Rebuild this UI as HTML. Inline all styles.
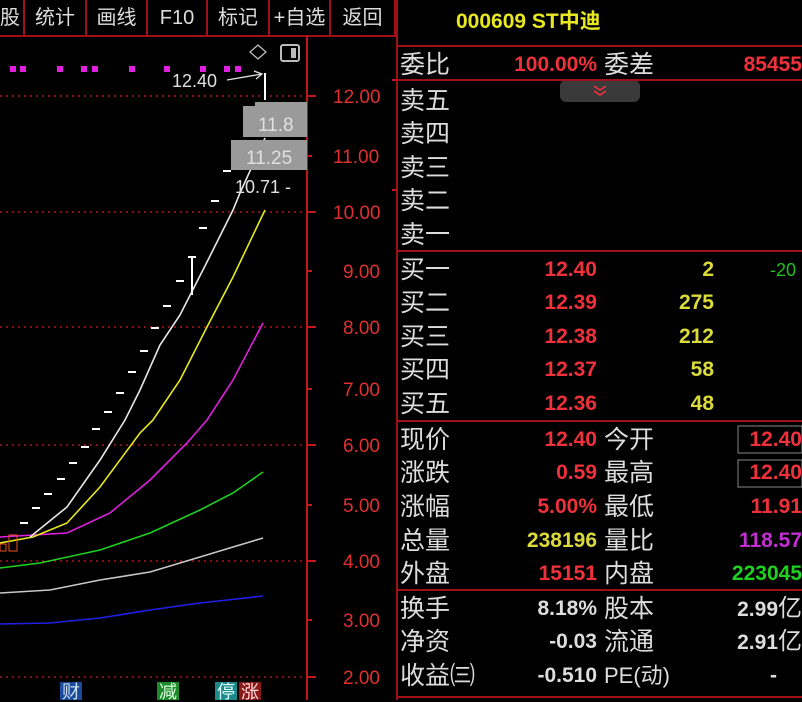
<!DOCTYPE html>
<html><head><meta charset="utf-8"><style>
body{margin:0;width:802px;height:700px;background:#000;overflow:hidden;position:relative;font-family:"Liberation Sans","WenQuanYi Zen Hei","Noto Sans CJK SC",sans-serif}
.t{position:absolute;white-space:nowrap}
.tb{position:absolute;top:0;height:35px;border-right:2px solid #a01018;color:#ddd;font-size:20px;line-height:36px;text-align:center}
.lab{position:absolute;left:400px;color:#ddd;font-size:25px;line-height:32px}
.lab2{position:absolute;left:604px;color:#ddd;font-size:25px;line-height:32px}
.v1{position:absolute;right:205px;font-size:21px;font-weight:bold;line-height:32px;text-align:right}
.v2{position:absolute;right:0px;font-size:21px;font-weight:bold;line-height:32px;text-align:right}
.vq{position:absolute;right:88px;font-size:21px;font-weight:bold;line-height:32px;color:#dada3a}
.r{color:#f0303a}.y{color:#dada3a}.w{color:#ddd}
.hl{position:absolute;left:397px;width:405px;height:2px;background:#a01018}
.ax{position:absolute;left:333px;color:#e03030;font-size:19px}
</style></head><body>
<div style="position:absolute;left:0;top:35px;width:397px;height:2px;background:#a01018"></div>
<div class="tb" style="left:0;width:23px;text-align:left">股</div>
<div class="tb" style="left:25px;width:60px">统计</div>
<div class="tb" style="left:87px;width:59px">画线</div>
<div class="tb" style="left:148px;width:58px">F10</div>
<div class="tb" style="left:208px;width:60px">标记</div>
<div class="tb" style="left:270px;width:59px">+自选</div>
<div class="tb" style="left:331px;width:63px">返回</div>
<svg width="802" height="700" style="position:absolute;left:0;top:0">
<g stroke="#b01818" stroke-width="1.5" stroke-dasharray="2,4">
<line x1="0" y1="96" x2="306" y2="96"/><line x1="0" y1="212" x2="306" y2="212"/><line x1="0" y1="327" x2="306" y2="327"/><line x1="0" y1="445" x2="306" y2="445"/><line x1="0" y1="561" x2="306" y2="561"/><line x1="0" y1="677" x2="306" y2="677"/></g>
<line x1="307" y1="36" x2="307" y2="700" stroke="#c01818" stroke-width="2"/>
<line x1="397" y1="0" x2="397" y2="700" stroke="#a01018" stroke-width="2"/>
<g stroke="#c01818" stroke-width="2">
<line x1="307" y1="96" x2="316" y2="96"/><line x1="307" y1="156" x2="312" y2="156"/><line x1="307" y1="212" x2="316" y2="212"/><line x1="307" y1="271" x2="312" y2="271"/><line x1="307" y1="327" x2="316" y2="327"/><line x1="307" y1="389" x2="312" y2="389"/><line x1="307" y1="445" x2="316" y2="445"/><line x1="307" y1="505" x2="312" y2="505"/><line x1="307" y1="561" x2="316" y2="561"/><line x1="307" y1="620" x2="312" y2="620"/><line x1="307" y1="677" x2="316" y2="677"/>
<line x1="397" y1="80" x2="392" y2="80"/><line x1="397" y1="190" x2="392" y2="190"/></g>
<g fill="none" stroke-width="1.6">
<polyline stroke="#2020e8" points="0,624 50,623 100,618 150,610 200,603 263,596"/>
<polyline stroke="#c8c8c8" points="0,593 50,590 100,580 150,572 200,557 233,547 263,538"/>
<polyline stroke="#20d020" points="0,568 40,563 100,550 150,533 200,510 233,493 263,472"/>
<polyline stroke="#e020e0" points="0,537 67,533 110,513 150,480 187,443 207,420 233,380 263,323"/>
<polyline stroke="#e8e820" points="0,543 33,537 67,523 100,487 140,433 153,420 180,380 207,327 233,277 265,210"/>
<polyline stroke="#e8e8e8" points="30,537 67,507 100,460 125,420 140,390 160,345 180,315 207,262 233,210 240,193 265,138"/>
</g>
<g fill="#fff">
<rect x="20" y="522" width="8" height="2"/><rect x="32" y="507" width="8" height="2"/><rect x="44" y="493" width="8" height="2"/><rect x="57" y="478" width="8" height="2"/><rect x="69" y="462" width="8" height="2"/><rect x="81" y="446" width="8" height="2"/><rect x="92" y="428" width="8" height="2"/><rect x="104" y="411" width="8" height="2"/><rect x="116" y="392" width="8" height="2"/><rect x="128" y="371" width="8" height="2"/><rect x="140" y="350" width="8" height="2"/><rect x="151" y="327" width="8" height="2"/><rect x="163" y="305" width="8" height="2"/><rect x="176" y="280" width="8" height="2"/><rect x="199" y="227" width="8" height="2"/><rect x="211" y="200" width="8" height="2"/><rect x="223" y="170" width="8" height="2"/>
<rect x="191" y="257" width="2" height="38"/><rect x="188" y="256" width="8" height="2"/>
<rect x="264" y="73" width="2" height="27"/>
</g>
<rect x="255" y="102" width="52" height="4" fill="#9a9a9a"/>
<rect x="243" y="106" width="64" height="31" fill="#9a9a9a"/>
<rect x="231" y="140" width="76" height="30" fill="#9a9a9a"/>
<text x="258" y="131" fill="#e0e0e0" font-size="19" font-family="Liberation Sans">11.8</text>
<text x="246" y="164" fill="#e0e0e0" font-size="19" font-family="Liberation Sans">11.25</text>
<text x="235" y="193" fill="#e0e0e0" font-size="18" font-family="Liberation Sans">10.71 -</text>
<text x="172" y="87" fill="#e0e0e0" font-size="18" font-family="Liberation Sans">12.40</text>
<path d="M227 80 L262 74 M254 71 L262 74 L256 79" stroke="#e0e0e0" stroke-width="1.3" fill="none"/>
<path d="M258 45 L266 52 L258 59 L250 52 Z" stroke="#bbb" stroke-width="1.3" fill="none"/>
<rect x="281" y="45" width="18" height="16" rx="2" stroke="#bbb" stroke-width="2" fill="none"/><rect x="291" y="48" width="5" height="10" fill="#bbb"/>
<g fill="#e020e0"><rect x="10" y="66" width="6" height="6"/><rect x="20" y="66" width="6" height="6"/><rect x="57" y="66" width="6" height="6"/><rect x="81" y="66" width="6" height="6"/><rect x="92" y="66" width="6" height="6"/><rect x="129" y="66" width="6" height="6"/><rect x="164" y="66" width="6" height="6"/><rect x="200" y="66" width="6" height="6"/><rect x="224" y="66" width="6" height="6"/><rect x="235" y="66" width="6" height="6"/></g>
<rect x="0" y="544" width="6" height="7" stroke="#f05020" fill="none"/><rect x="9" y="535" width="8" height="16" stroke="#f05020" fill="none"/>
<rect x="560" y="80" width="80" height="22" rx="6" fill="#3a3a3a"/>
<path d="M594 86 L600 90 L606 86 M594 91 L600 95 L606 91" stroke="#f03040" stroke-width="1.6" fill="none"/>
<rect x="738" y="426" width="64" height="27" stroke="#888" fill="none"/><rect x="738" y="460" width="64" height="27" stroke="#888" fill="none"/>
</svg>
<div class="ax" style="top:87px">12.00</div><div class="ax" style="top:147px">11.00</div><div class="ax" style="top:203px">10.00</div><div class="ax" style="top:262px;left:343px">9.00</div><div class="ax" style="top:318px;left:343px">8.00</div><div class="ax" style="top:380px;left:343px">7.00</div><div class="ax" style="top:436px;left:343px">6.00</div><div class="ax" style="top:496px;left:343px">5.00</div><div class="ax" style="top:552px;left:343px">4.00</div><div class="ax" style="top:611px;left:343px">3.00</div><div class="ax" style="top:668px;left:343px">2.00</div>
<div class="t" style="left:60px;top:682px;width:22px;height:18px;background:#1a4a9a;color:#cde;font-size:18px;line-height:20px;text-align:center">财</div>
<div class="t" style="left:157px;top:682px;width:22px;height:18px;background:#1a8a2a;color:#dfd;font-size:18px;line-height:20px;text-align:center">减</div>
<div class="t" style="left:215px;top:682px;width:22px;height:18px;background:#1a8a8a;color:#dff;font-size:18px;line-height:20px;text-align:center">停</div>
<div class="t" style="left:239px;top:682px;width:22px;height:18px;background:#8a1a1a;color:#fdd;font-size:18px;line-height:20px;text-align:center">涨</div>

<div class="t" style="left:456px;top:8px;color:#e8e820;font-size:21px;font-weight:bold;line-height:28px">000609 ST中迪</div>
<div class="hl" style="top:45px"></div><div class="hl" style="top:79px"></div><div class="hl" style="top:250px"></div><div class="hl" style="top:420px"></div><div class="hl" style="top:589px"></div><div class="hl" style="top:696px"></div>
<div class="lab" style="top:49px">委比</div><div class="v1 r" style="top:49px">100.00%</div><div class="lab2" style="top:49px">委差</div><div class="v2 r" style="top:49px">85455</div>
<div class="lab" style="top:85px">卖五</div><div class="lab" style="top:118px">卖四</div><div class="lab" style="top:152px">卖三</div><div class="lab" style="top:185px">卖二</div><div class="lab" style="top:219px">卖一</div>
<div class="lab" style="top:254px">买一</div><div class="v1 r" style="top:254px">12.40</div><div class="vq" style="top:254px">2</div><div class="t" style="left:770px;top:254px;color:#20c020;font-size:18px;line-height:32px">-20</div>
<div class="lab" style="top:287px">买二</div><div class="v1 r" style="top:287px">12.39</div><div class="vq" style="top:287px">275</div>
<div class="lab" style="top:321px">买三</div><div class="v1 r" style="top:321px">12.38</div><div class="vq" style="top:321px">212</div>
<div class="lab" style="top:354px">买四</div><div class="v1 r" style="top:354px">12.37</div><div class="vq" style="top:354px">58</div>
<div class="lab" style="top:388px">买五</div><div class="v1 r" style="top:388px">12.36</div><div class="vq" style="top:388px">48</div>
<div class="lab" style="top:424px">现价</div><div class="v1 r" style="top:424px">12.40</div><div class="lab2" style="top:424px">今开</div><div class="v2 r" style="top:424px">12.40</div>
<div class="lab" style="top:457px">涨跌</div><div class="v1 r" style="top:457px">0.59</div><div class="lab2" style="top:457px">最高</div><div class="v2 r" style="top:457px">12.40</div>
<div class="lab" style="top:491px">涨幅</div><div class="v1 r" style="top:491px">5.00%</div><div class="lab2" style="top:491px">最低</div><div class="v2 r" style="top:491px">11.91</div>
<div class="lab" style="top:525px">总量</div><div class="v1 y" style="top:525px">238196</div><div class="lab2" style="top:525px">量比</div><div class="v2" style="top:525px;color:#c030d0">118.57</div>
<div class="lab" style="top:558px">外盘</div><div class="v1 r" style="top:558px">15151</div><div class="lab2" style="top:558px">内盘</div><div class="v2" style="top:558px;color:#20d020">223045</div>
<div class="lab" style="top:593px">换手</div><div class="v1 w" style="top:593px">8.18%</div><div class="lab2" style="top:593px">股本</div><div class="v2 w" style="top:593px">2.99<span style="font-weight:normal;font-size:24px">亿</span></div>
<div class="lab" style="top:626px">净资</div><div class="v1 w" style="top:626px">-0.03</div><div class="lab2" style="top:626px">流通</div><div class="v2 w" style="top:626px">2.91<span style="font-weight:normal;font-size:24px">亿</span></div>
<div class="lab" style="top:660px">收益㈢</div><div class="v1 w" style="top:660px">-0.510</div><div class="lab2" style="top:660px;font-size:22px">PE(动)</div><div class="v2 w" style="top:660px;right:25px">-</div>
</body></html>
